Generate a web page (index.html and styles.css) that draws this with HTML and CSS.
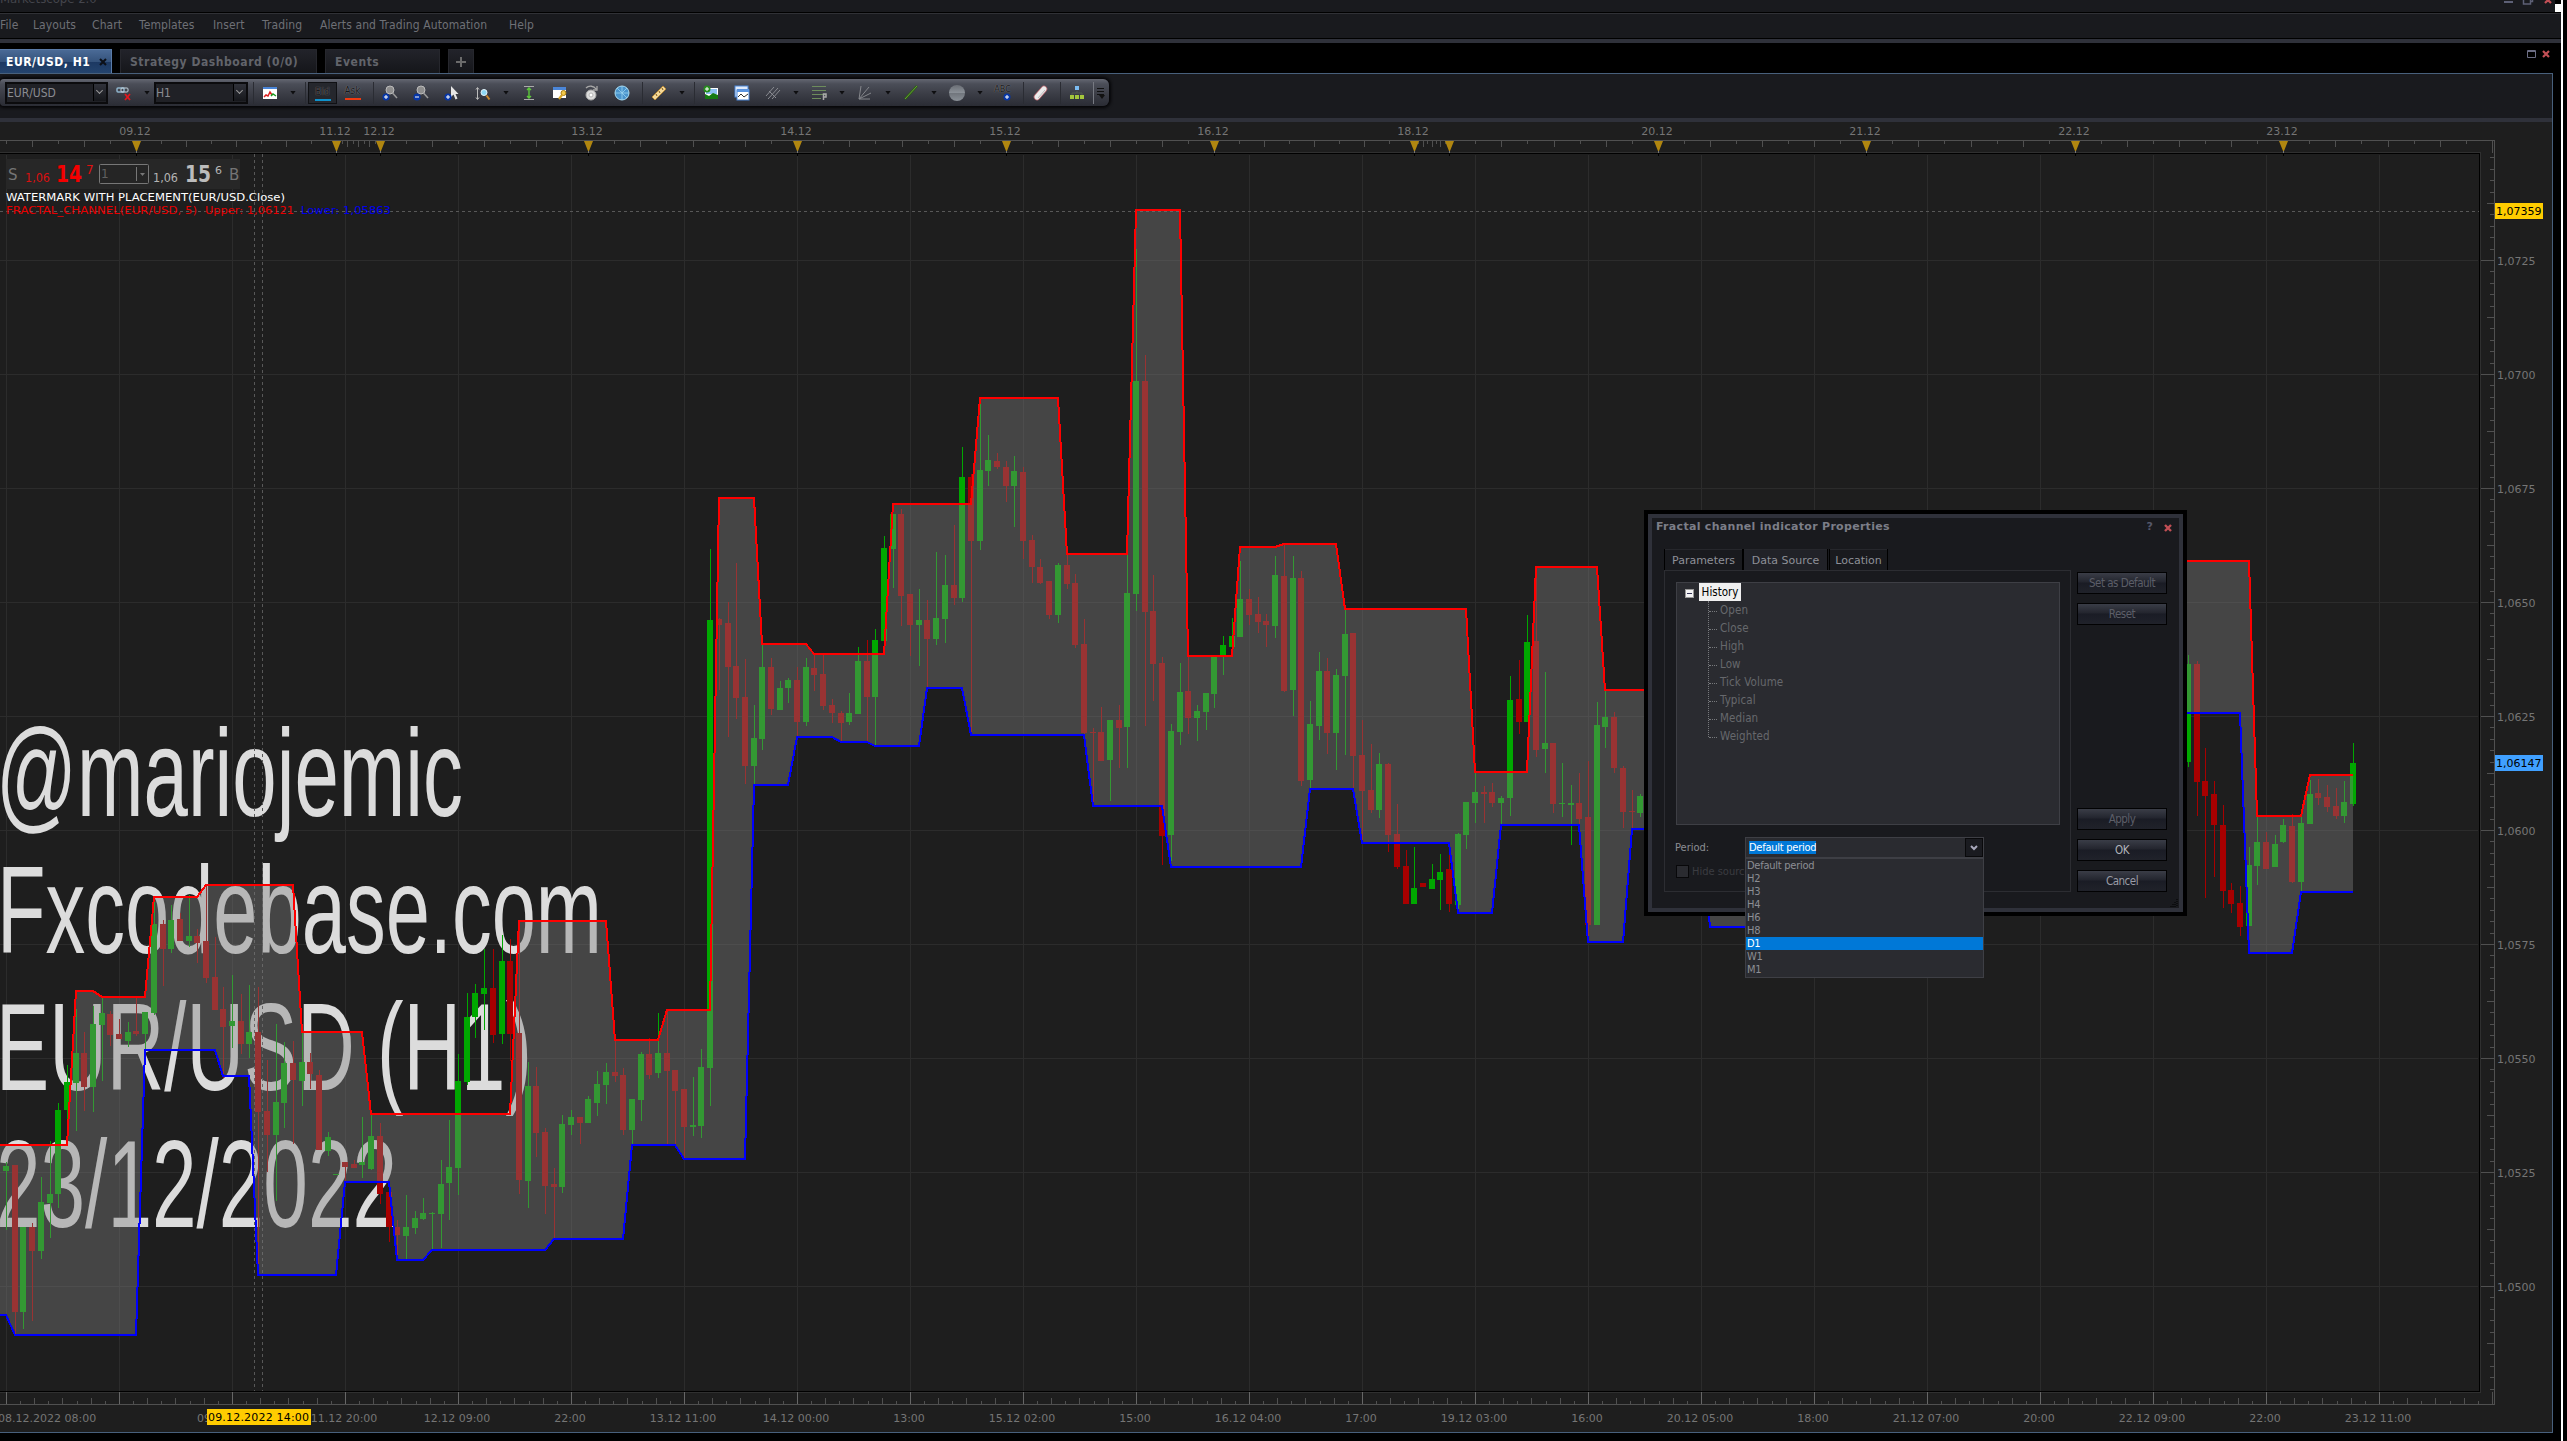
FILE: index.html
```html
<!DOCTYPE html>
<html lang="en">
<head>
  <meta charset="UTF-8" />
  <title>Marketscope 2.0</title>
  <link rel="stylesheet" href="styles.css">
</head>
<body>
  <div class="window">
    <header class="titlebar">
      <span class="app-name">Marketscope 2.0</span>
      <svg class="window-buttons" width="50" height="8" viewBox="0 0 50 8">
        <path d="M1 2h9" stroke="#5d6076" stroke-width="2" />
        <path d="M20.500 -3v7h7v-7M27 1.500h2.500v-4" fill="none" stroke="#5d6076" stroke-width="1.500" />
        <path d="M42 3l6-6M42 -3l6 6" stroke="#c24f55" stroke-width="2.200" />
      </svg>
    </header>

    <nav class="menu">
      <span class="m-file">File</span>
      <span class="m-layouts">Layouts</span>
      <span class="m-chart">Chart</span>
      <span class="m-templates">Templates</span>
      <span class="m-insert">Insert</span>
      <span class="m-trading">Trading</span>
      <span class="m-alerts">Alerts and Trading Automation</span>
      <span>Help</span>
    </nav>

    <div class="tabs">
      <div class="tab tab-active">EUR/USD, H1
        <svg width="8" height="8" viewBox="0 0 8 8"><path d="M1 1l6 6M7 1l-6 6" stroke="#0c1018" stroke-width="2" /></svg>
      </div>
      <div class="tab tab-dashboard">Strategy Dashboard (0/0)</div>
      <div class="tab tab-events">Events</div>
      <div class="tab tab-add">
        <svg width="10" height="10" viewBox="0 0 10 10"><path d="M5 0v10M0 5h10" stroke="#6b6b6b" stroke-width="2" /></svg>
      </div>
      <svg class="tab-buttons" width="24" height="9" viewBox="0 0 24 9">
        <path d="M.500 .500h8v7h-8zM0 1.500h9" fill="none" stroke="#6b6d84" />
        <path d="M16 1l6 6M22 1l-6 6" stroke="#c24f55" stroke-width="2.200" />
      </svg>
    </div>

    <main class="workspace">
      <div class="toolbar-row">
        <div class="toolbar">
          <div class="combo combo-symbol"><span>EUR/USD</span><i class="combo-arrow"></i></div>
          <span class="tool">
            <svg width="16" height="16" viewBox="0 0 16 16"><rect x="1" y="3" width="7" height="4" rx="1" fill="none" stroke="#8fb4cc" stroke-width="1.500" /><rect x="5" y="3" width="7" height="4" rx="1" fill="none" stroke="#c4d4de" /><path d="M9 9l5 6M14 9l-5 6" stroke="#e0181e" stroke-width="1.800" /></svg>
          </span>
          <i class="caret"></i>
          <div class="combo combo-period"><span>H1</span><i class="combo-arrow"></i></div>
          <i class="sep"></i>
          <span class="tool">
            <svg width="16" height="16" viewBox="0 0 16 16"><rect x="1" y="2" width="14" height="12" fill="#fff" /><rect x="1" y="2" width="14" height="2" fill="#4b86d8" /><path d="M2 12l2-2 2 1 2-4 2 3" fill="none" stroke="#d22" stroke-width="1.500" /><path d="M9 11l2-2 3 2" fill="none" stroke="#1a9a20" stroke-width="1.500" /></svg>
          </span>
          <i class="caret"></i>
          <i class="sep"></i>
          <span class="quote quote-bid">Bid</span>
          <span class="quote quote-ask">Ask</span>
          <i class="sep"></i>
          <span class="tool">
            <svg width="16" height="16" viewBox="0 0 16 16"><circle cx="8" cy="5" r="4" fill="#8e8e8e" stroke="#bbb" /><path d="M10.500 8l4.500 5" stroke="#9a9a9a" stroke-width="1.500" /><circle cx="4" cy="12" r="3.500" fill="#0636a8" /><path d="M4 10v4M2 12h4" stroke="#fff" /></svg>
          </span>
          <span class="tool">
            <svg width="16" height="16" viewBox="0 0 16 16"><circle cx="8" cy="5" r="4" fill="#8e8e8e" stroke="#bbb" /><path d="M10.500 8l4.500 5" stroke="#9a9a9a" stroke-width="1.500" /><circle cx="4" cy="12" r="3.500" fill="#0636a8" /><path d="M2 12h4" stroke="#fff" /></svg>
          </span>
          <span class="tool">
            <svg width="16" height="16" viewBox="0 0 16 16"><path d="M7 1v11l2.500-2.500 2 5 2-1-2-4.500h3z" fill="#e6e6e6" /><circle cx="4" cy="12" r="3.500" fill="#0636a8" /><path d="M4 10v4M2 12h4" stroke="#fff" /></svg>
          </span>
          <span class="tool">
            <svg width="16" height="16" viewBox="0 0 16 16"><path d="M2.500 3v11M1 4.500L2.500 2.500 4 4.500M1 12.500l1.500 2 1.500-2" fill="none" stroke="#bbb" /><circle cx="9" cy="7.500" r="3" fill="#8fd8f4" stroke="#e6f6fc" /><path d="M11.500 10.500l3 4" stroke="#c8862a" stroke-width="2" /></svg>
          </span>
          <i class="caret"></i>
          <span class="tool">
            <svg width="16" height="16" viewBox="0 0 16 16"><path d="M3 1.500h10M3 14.500h10" stroke="#aaa" /><path d="M8 3v10M6 5l2-2 2 2M6 11l2 2 2-2" fill="none" stroke="#5cc83a" stroke-width="1.400" /></svg>
          </span>
          <span class="tool">
            <svg width="16" height="16" viewBox="0 0 16 16"><rect x="1" y="2" width="13" height="11" fill="#fff" /><rect x="1" y="2" width="13" height="3" fill="#4b86d8" /><circle cx="11.500" cy="8" r="2.500" fill="#f2c84a" stroke="#a87d14" /><path d="M10 10l-3 4" stroke="#d9a526" stroke-width="2.200" /></svg>
          </span>
          <span class="tool">
            <svg width="16" height="16" viewBox="0 0 16 16"><circle cx="8" cy="10" r="5" fill="#ddd" stroke="#aaa" /><circle cx="8" cy="10" r="2" fill="#fff" stroke="#b5b5b5" /><path d="M3 3c3-3 8-2 10 1M14 1v4h-4" fill="none" stroke="#a8a8a8" stroke-width="1.300" /></svg>
          </span>
          <span class="tool">
            <svg width="16" height="16" viewBox="0 0 16 16"><circle cx="8" cy="8" r="7" fill="#4a94cc" stroke="#a8dcf2" /><path d="M8 1v14M1 8h14M3 3l5 5 5-5M8 8l5 5" stroke="#9ad4f0" stroke-width=".8" fill="none" /></svg>
          </span>
          <i class="sep"></i>
          <span class="tool">
            <svg width="16" height="16" viewBox="0 0 16 16"><path d="M1 12L12 1l3 3L4 15z" fill="#f4d898" stroke="#b88a38" /><path d="M5 9l1 2M8 6l1 2M11 3l1 2" stroke="#7a5418" /></svg>
          </span>
          <i class="caret"></i>
          <i class="sep"></i>
          <span class="tool">
            <svg width="16" height="16" viewBox="0 0 16 16"><rect x="2" y="3" width="13" height="11" fill="#fff" /><rect x="3" y="4" width="11" height="5" fill="#8cc0f0" /><path d="M2 14V9l4 2 4-3 5 2v4z" fill="#157a10" /><circle cx="4" cy="4" r="3.500" fill="#258c1c" /><path d="M4 2v4M2 4h4" stroke="#fff" /></svg>
          </span>
          <span class="tool">
            <svg width="16" height="16" viewBox="0 0 16 16"><rect x="1" y="1" width="13" height="11" fill="#dfeafa" stroke="#4b86d8" /><rect x="3" y="5" width="12" height="10" fill="#fff" stroke="#4b86d8" /><rect x="3" y="4" width="12" height="3" fill="#5a94e0" /><path d="M4 12l3-3 3 3 4-3" fill="none" stroke="#333" /></svg>
          </span>
          <span class="tool">
            <svg width="16" height="16" viewBox="0 0 16 16"><path d="M1 11L9 2M3 14L13 3M7 14l8-9M4 6l7 7" stroke="#8a8c92" /></svg>
          </span>
          <i class="caret"></i>
          <span class="tool">
            <svg width="16" height="16" viewBox="0 0 16 16"><path d="M1 1.500h14M1 5.500h14M1 9.500h14M1 13.500h9" stroke="#6d8c5c" stroke-width="1.200" /><path d="M12.500 15V9h2.500v3h-2" fill="none" stroke="#aaa" stroke-width="1.500" /></svg>
          </span>
          <i class="caret"></i>
          <span class="tool">
            <svg width="16" height="16" viewBox="0 0 16 16"><path d="M2 14L4 1M2 14L12 2M2 14l12-6M2 14h11" stroke="#85878c" /></svg>
          </span>
          <i class="caret"></i>
          <span class="tool">
            <svg width="16" height="16" viewBox="0 0 16 16"><path d="M2 14L14 1" stroke="#2e5c16" stroke-width="2.500" /><path d="M2 14L14 1" stroke="#62a034" /></svg>
          </span>
          <i class="caret"></i>
          <span class="tool"><i class="ball"></i></span>
          <i class="caret"></i>
          <span class="tool tool-text">ABC
            <svg width="8" height="8" viewBox="0 0 8 8"><circle cx="4" cy="4" r="3.500" fill="#0636a8" /><path d="M4 2v4M2 4h4" stroke="#fff" /></svg>
          </span>
          <i class="sep"></i>
          <span class="tool">
            <svg width="16" height="16" viewBox="0 0 16 16"><path d="M5 12L12 4" stroke="#b86a72" stroke-width="6.500" stroke-linecap="round" /><path d="M5 12L12 4" stroke="#ececec" stroke-width="5" stroke-linecap="round" /><path d="M6 13l7-8" stroke="#bbb" /></svg>
          </span>
          <i class="sep"></i>
          <span class="tool">
            <svg width="16" height="16" viewBox="0 0 16 16"><rect x="6" y="1" width="4" height="4" fill="#7cbcf2" /><path d="M8 6v2M3 10V8h10v2" stroke="#555a52" fill="none" /><path d="M1 10h4v4H1zM6 10h4v4H6zM11 10h4v4h-4z" fill="#a4c63c" /></svg>
          </span>
          <i class="sep sep-last"></i>
          <svg class="grip" width="10" height="12" viewBox="0 0 10 12"><path d="M1 1.500h7M1 4.500h7M1 7.500h7" stroke="#111" /><path d="M3 8h6l-3 4z" fill="#111" /></svg>
        </div>
      </div>
      <svg id="chart" width="2552" height="1310" viewBox="0 122 2552 1310"></svg>
    </main>
  </div>

  <div class="dialog">
    <div class="dialog-title">
      <span>Fractal channel indicator Properties</span>
      <b>?</b>
      <svg width="8" height="8" viewBox="0 0 8 8"><path d="M1 1l6 6M7 1l-6 6" stroke="#c24f55" stroke-width="2.400" /></svg>
    </div>
    <div class="dialog-body">
      <div class="dialog-main">
        <div class="dialog-tabs">
          <span class="d-params">Parameters</span>
          <span class="d-source">Data Source</span>
          <span class="d-location">Location</span>
        </div>
        <div class="panel">
          <div class="tree">
            <div class="tree-root"><i class="toggle"></i><span>History</span></div>
            <ul>
              <li>Open</li>
              <li>Close</li>
              <li>High</li>
              <li>Low</li>
              <li>Tick Volume</li>
              <li>Typical</li>
              <li>Median</li>
              <li>Weighted</li>
            </ul>
          </div>
          <div class="period-row">
            <label>Period:</label>
            <div class="select">
              <span>Default period</span>
              <i class="select-arrow"><svg width="8" height="6" viewBox="0 0 8 6"><path d="M1 1l3 3 3-3" fill="none" stroke="#a8a8bc" stroke-width="2" /></svg></i>
              <div class="options">
                <div>Default period</div>
                <div>H2</div>
                <div>H3</div>
                <div>H4</div>
                <div>H6</div>
                <div>H8</div>
                <div class="selected">D1</div>
                <div>W1</div>
                <div>M1</div>
              </div>
            </div>
          </div>
          <div class="hide-row"><i></i>Hide source</div>
        </div>
      </div>
      <div class="dialog-buttons">
        <button class="off">Set as Default</button>
        <button class="off">Reset</button>
        <button class="off apply">Apply</button>
        <button class="ok">OK</button>
        <button>Cancel</button>
      </div>
    </div>
    <svg class="resize" width="8" height="8" viewBox="0 0 8 8"><path d="M7 0v8M5 3v5M3 5v3M1 7v1" stroke="#000" stroke-dasharray="1 1" /></svg>
  </div>

  <script src="chart.js"></script>
</body>
</html>
```
FILE: styles.css
```css
body {
  margin: 0;
  width: 2567px;
  height: 1441px;
  overflow: hidden;
  background: #000;
  font-family: "DejaVu Sans Condensed", "DejaVu Sans", sans-serif;
  font-size: 12px;
  color: #6e7076;
}
.window {
  width: 2561px;
  height: 1441px;
  border-right: 2px solid #fff;
}
.titlebar {
  display: flex;
  justify-content: space-between;
  width: 2555px;
  height: 12px;
  background: #191a1e;
  box-shadow: 8px 4px 0 #fff;
  overflow: hidden;
}
.app-name {
  line-height: 14px;
  margin-top: -8px;
  font-size: 13px;
  color: #44454c;
}
.window-buttons {
  margin-right: 2px;
}
.menu {
  display: flex;
  box-sizing: border-box;
  height: 31px;
  border-top: 1px solid #000;
  border-bottom: 4px solid #2f313a;
  box-shadow: inset 0 1px 0 #303136, inset 0 -1px 0 #000;
  background: #191a1e;
  line-height: 25px;
  white-space: nowrap;
}
.menu span {
  letter-spacing: 0.1px;
}
.m-file { width: 33px; }
.m-layouts { width: 59px; }
.m-chart { width: 47px; }
.m-templates { width: 74px; }
.m-insert { width: 49px; }
.m-trading { width: 58px; }
.m-alerts { width: 189px; }

.tabs {
  display: flex;
  align-items: flex-end;
  gap: 8px;
  height: 30px;
  background: #000;
}
.tab {
  display: flex;
  align-items: center;
  box-sizing: border-box;
  height: 24px;
  padding-left: 9px;
  border: 1px solid #26272d;
  border-bottom: none;
  background: linear-gradient(#22232a, #15161a);
  color: #62646b;
  font-weight: bold;
  letter-spacing: 0.55px;
}
.tab-active {
  justify-content: space-between;
  width: 112px;
  padding: 0 4px 0 6px;
  border-color: #5a7ba8;
  border-left: none;
  background: linear-gradient(#4a6a96 0, #35537c 50%, #1c3862 51%, #24446e);
  color: #fff;
  white-space: nowrap;
}
.tab-dashboard { width: 197px; }
.tab-events { width: 115px; }
.tab-add {
  width: 26px;
  padding-left: 7px;
}
.tab-buttons {
  margin: 0 10px 14px auto;
}
.workspace {
  width: 2552px;
  height: 1358px;
  border: 1px solid #48607c;
  border-left: none;
}
.toolbar-row {
  box-sizing: border-box;
  height: 48px;
  padding-top: 5px;
  background: #191a1e;
  border-bottom: 4px solid #2f313a;
}
.toolbar {
  display: flex;
  align-items: center;
  box-sizing: border-box;
  width: 1109px;
  height: 27px;
  padding-left: 5px;
  border-radius: 4px 6px 6px 4px;
  background: linear-gradient(#646772 0, #4b4e58 18%, #3b3d46 55%, #2a2c34 100%);
  box-shadow: 0 0 3px 2px #060608;
}
.combo {
  display: flex;
  justify-content: space-between;
  align-items: center;
  box-sizing: border-box;
  height: 22px;
  border: 2px solid #0b0b0d;
  background: #202126;
  color: #8a8c92;
}
.combo-symbol { width: 103px; }
.combo-period { width: 94px; }
.combo-arrow {
  box-sizing: border-box;
  width: 13px;
  height: 17px;
  border-left: 1px solid #000;
  background: linear-gradient(#30323a, #16171b);
  position: relative;
}
.combo-arrow::after {
  content: "";
  position: absolute;
  left: 3px;
  top: 4px;
  width: 4px;
  height: 4px;
  border: solid #999;
  border-width: 0 1px 1px 0;
  transform: rotate(45deg);
}
.tool {
  display: flex;
  justify-content: center;
  flex: none;
  width: 31px;
}
.caret {
  flex: none;
  box-sizing: border-box;
  width: 15px;
  height: 4px;
  background: #0e0e10;
  clip-path: polygon(5px 0, 11px 0, 8px 4px);
}
.sep {
  flex: none;
  width: 1px;
  height: 22px;
  margin-left: 5px;
  background: #2a2c33;
}
.sep-last {
  margin-left: 1px;
  background: #777a82;
}
.grip {
  margin-left: 2px;
}
.quote {
  box-sizing: border-box;
  height: 22px;
  text-align: center;
  font-size: 10px;
  line-height: 17px;
  color: #17181b;
  text-shadow: 0 0 1px #9a9a9a;
}
.quote::after {
  content: "";
  display: block;
  width: 16px;
  height: 2px;
  margin: -1px auto 0;
  background: #0f92cc;
}
.quote-bid {
  width: 29px;
  margin-left: 2px;
  background: #25272d;
  border: 1px solid #101114;
}
.quote-ask { width: 31px; }
.quote-ask::after { background: #f03a10; }
.ball {
  width: 16px;
  height: 16px;
  border-radius: 50%;
  background: linear-gradient(#6a6e75, #8c9299 50%, #70757c 51%, #8a9097);
}
.tool-text {
  position: relative;
  font-size: 9px;
  color: #17181b;
  text-shadow: 0 0 1px #999;
  line-height: 20px;
  height: 27px;
}
.tool-text svg {
  position: absolute;
  left: 16px;
  top: 14px;
}
#chart {
  display: block;
  background: #1e1e1e;
  font-family: "DejaVu Sans", sans-serif;
  font-size: 11px;
}

.dialog {
  position: absolute;
  left: 1644px;
  top: 510px;
  box-sizing: border-box;
  width: 543px;
  height: 406px;
  border: 4px solid #000;
  box-shadow: inset 0 0 0 4px #2f313a;
  padding: 4px;
  background: #191a1e;
  font-size: 11px;
}
.dialog-title {
  display: flex;
  align-items: center;
  height: 16px;
  padding: 0 7px 1px 4px;
  font: bold 11px "DejaVu Sans", sans-serif;
  color: #7c7e88;
}
.dialog-title span {
  flex: 1;
  letter-spacing: 0.3px;
}
.dialog-title b {
  margin-right: 11px;
  color: #55576a;
}
.dialog-title svg { margin-top: 3px; }
.dialog-body {
  display: flex;
  justify-content: space-between;
  padding: 14px 12px 0 12px;
}
.dialog-main { width: 407px; }
.dialog-tabs {
  display: flex;
  height: 21px;
  line-height: 23px;
  font-family: "DejaVu Sans", sans-serif;
  color: #8e9098;
  text-align: center;
}
.dialog-tabs span {
  box-sizing: border-box;
  border: solid #000;
  border-width: 0 1px;
  box-shadow: inset 0 1px 0 #26272c;
}
.d-params { width: 79px; }
.d-source { width: 85px; background: #212228; }
.d-location { width: 59px; margin-left: 1px; }
.panel {
  box-sizing: border-box;
  height: 322px;
  padding: 11px 10px 11px 11px;
  border: 1px solid #2c2d32;
}
.tree {
  box-sizing: border-box;
  height: 243px;
  border: 1px solid #3e3f45;
  background: #2a2b30;
  font-size: 11.5px;
  color: #66686c;
}
.tree-root {
  display: flex;
  align-items: center;
  height: 18px;
  padding-left: 8px;
}
.tree-root span {
  width: 42px;
  margin-left: 5px;
  line-height: 18px;
  text-align: center;
  background: #f0f0f0;
  color: #000;
}
.toggle {
  box-sizing: border-box;
  width: 9px;
  height: 9px;
  margin-top: 2px;
  border: 1px solid #999;
  background: linear-gradient(#335 0 0) center / 5px 1px no-repeat #f4f4f4;
}
.tree ul {
  list-style: none;
  margin: 0 0 0 31px;
  padding: 0;
  height: 136px;
  border-left: 1px dotted #77797c;
}
.tree li {
  display: flex;
  align-items: center;
  height: 18px;
  letter-spacing: 0.1px;
}
.tree li::before {
  content: "";
  width: 8px;
  margin: 2px 3px 0 0;
  border-top: 1px dotted #77797c;
}
.period-row {
  display: flex;
  align-items: center;
  height: 21px;
  margin-top: 12px;
  color: #8c8e94;
}
.period-row label {
  width: 70px;
  margin-left: -1px;
}
.select {
  position: relative;
  display: flex;
  align-items: center;
  justify-content: space-between;
  box-sizing: border-box;
  width: 239px;
  height: 21px;
  padding-left: 3px;
  border: 1px solid #3e3f45;
  background: #2a2b30;
  letter-spacing: -0.25px;
}
.select > span {
  line-height: 13px;
  background: #0078d7;
  color: #fff;
}
.select-arrow {
  display: flex;
  align-items: center;
  justify-content: center;
  width: 16px;
  height: 17px;
  border: 1px solid #09090b;
  background: #1a1b20;
}
.options {
  position: absolute;
  left: -1px;
  top: 20px;
  width: 237px;
  height: 118px;
  border: 1px solid #3e3f45;
  background: #2a2b30;
  line-height: 14px;
  color: #8c8e94;
}
.options div {
  height: 13px;
  padding-left: 1px;
}
.options .selected {
  background: #0078d7;
  color: #fff;
}
.hide-row {
  display: flex;
  align-items: center;
  margin-top: 7px;
  color: #3b3c41;
}
.hide-row i {
  width: 11px;
  height: 11px;
  margin-right: 3px;
  border: 1px solid #08080a;
  background: #2a2b30;
}
.dialog-buttons {
  display: flex;
  flex-direction: column;
  gap: 9px;
  padding-top: 23px;
  height: 320px;
}
.dialog-buttons button {
  box-sizing: border-box;
  width: 90px;
  height: 22px;
  padding: 0;
  border: 1px solid #020203;
  background: linear-gradient(#3a3d47 0, #23252e 45%, #1a1c25 50%, #20222a);
  font: 11.500px "DejaVu Sans Condensed", sans-serif;
  letter-spacing: -0.5px;
  color: #9a9ca6;
}
.dialog-buttons .off { color: #5c5e68; }
.dialog-buttons .apply { margin-top: auto; }
.dialog-buttons .ok { color: #b0b2ba; }
.resize {
  position: absolute;
  right: 5px;
  bottom: 5px;
}
```
FILE: chart.js
```js
const svg = document.getElementById('chart');
const NS = 'http://www.w3.org/2000/svg';

const UP = '#00a800';
const DOWN = '#a80000';
const GRID = '#2c2c2c';
const AXIS = '#505050';
const LABEL = '#757575';

const barX = i => Math.round(6.1 + i * 113 / 13);

function add(tag, attrs, text) {
  const el = document.createElementNS(NS, tag);
  for (const key in attrs) el.setAttribute(key, attrs[key]);
  if (text !== undefined) el.textContent = text;
  svg.appendChild(el);
  return el;
}
function rect(x, y, width, height, fill) {
  add('rect', { x, y, width, height, fill });
}
function label(x, y, text, fill, extra) {
  add('text', Object.assign({ x, y, fill }, extra), text);
}

// bars: direction, high, body top, body bottom, low (y = base + value / step)
const series = [
  { first: -1, base: 640, step: 2.24, bars: `
    G 1187 1187 1320 1320|G 1170 1178 1189 1322|R 1176 1176 1505 1556|G 1315 1315 1505 1543
    R 1306 1315 1369 1525|G 1203 1259 1369 1386|G 1122 1241 1261 1340|G 1038 1053 1241 1272
    G 952 990 1053 1090|G 826 925 992 1100|R 878 925 1001 1056|G 820 860 1001 1057
    G 800 836 862 987|R 830 838 885 910|R 849 883 894 894|G 856 878 898 912
    R 800 876 883 888|G 834 834 883 917|G 577 636 836 840|R 627 636 692 775
    G 594 627 692 700|R 612 625 674 674|G 571 663 674 688|R 647 663 679 724
    R 550 674 757 768|R 665 755 829 829|R 777 827 867 980|G 750 853 865 914
    R 793 853 905 928|G 773 878 905 936|R 778 878 1057 1420|R 940 1055 1109 1192
    G 860 1035 1109 1257|G 900 948 1037 1094|R 898 948 986 1130|G 880 945 988 1044
    R 925 945 972 1006|R 963 974 1142 1142|G 1102 1113 1145 1156|G 1196 1196 1198 1198
    R 1170 1170 1180 1211|R 1165 1174 1183 1183|G 1068 1169 1176 1205|G 1062 1111 1185 1187
    R 1082 1111 1240 1263|R 1236 1236 1315 1348|R 1300 1314 1333 1388|G 1243 1315 1335 1386
    G 1279 1295 1317 1331|G 1250 1284 1297 1299|G 1281 1284 1286 1366|G 1165 1219 1286 1362
    G 1075 1180 1216 1299|G 927 988 1183 1244|G 791 844 990 997|G 771 791 844 892
    G 693 780 793 874|R 692 780 885 902|G 661 719 883 905|R 670 719 883 942
    R 630 880 1210 1241|G 945 999 1212 1272|R 956 999 1104 1157|R 1092 1102 1223 1286
    R 1183 1219 1225 1341|G 1064 1084 1225 1239|G 1053 1068 1086 1108|R 1068 1068 1082 1130
    G 1022 1028 1082 1082|G 965 995 1038 1067` },
  { first: 69, base: 850, step: 3, bars: `
    G 639 666 705 762|R 572 666 678 696|R 654 675 840 855|G 747 747 840 884
    G 606 612 750 813|R 564 612 675 687|G 489 609 669 684|R 482 609 663 882
    R 660 660 723 882|R 717 717 831 924|G 681 825 831 858|G 597 651 828 864
    G -903 -690 654 768` },
  { first: 82, base: 180, step: 2.24, bars: `
    R 980 983 997 1143|R 946 992 1091 1248|R 859 1089 1160 1207|R 1073 1158 1313 1352
    G 1176 1250 1313 1355|G 1040 1091 1252 1277|R 1071 1091 1185 1198|G 1122 1138 1187 1187
    G 1116 1120 1138 1172|R 1091 1120 1214 1246|G 1071 1091 1214 1223|R 1062 1093 1109 1145
    R 1065 1107 1178 1187|R 1163 1176 1194 1216|R 1189 1194 1216 1257|G 1149 1194 1214 1221
    G 1047 1077 1196 1196|R 1030 1077 1158 1259|G 1006 1030 1158 1266|G 797 824 1033 1033
    G 748 748 827 914|R 737 748 932 999|R 927 927 997 1066|G 916 986 997 1089
    R 941 986 1028 1138|G 833 981 1028 1042|G 840 907 983 1037|R 773 907 936 953
    G 598 665 936 945|R 658 665 809 1244|G 490 650 809 829|G 571 627 652 685
    R 611 629 643 647|R 629 643 685 721|G 618 652 685 777|R 643 654 809 849
    R 795 806 867 903|R 849 867 903 905|R 898 898 974 983|G 858 862 974 992
    R 840 862 905 916|R 883 903 1042 1048|R 983 1039 1239 1244|R 1228 1236 1239 1400
    R 1180 1236 1301 1301|G 1210 1210 1299 1391|R 1176 1210 1228 1317|G 840 925 1225 1317
    G 155 450 927 965|R 392 450 968 1223|R 885 965 1084 1168|R 1068 1082 1469 1534
    G 1219 1234 1467 1525|G 1082 1147 1236 1266|R 1066 1145 1205 1241|G 1176 1189 1205 1257
    G 1149 1149 1192 1232|G 1066 1068 1151 1183|G 1021 1042 1064 1109|G 981 1021 1046 1046
    G 853 939 1024 1024|R 916 939 974 997|R 934 972 990 1015` },
  { first: 145, base: 500, step: 3, bars: `
    R 342 363 375 441|G 168 225 378 414|R 135 228 573 576|G 168 234 570 648
    R 213 234 843 858|G 603 672 840 866|G 456 513 678 720|R 474 513 699 762
    G 507 525 699 810|G 327 402 528 765|R 399 399 768 866|R 660 765 873 1027
    R 732 870 930 939|G 759 792 930 954|R 789 792 1005 1056|R 912 1002 1101 1107
    R 1050 1098 1212 1212|G 1041 1164 1212 1212|R 1149 1149 1161 1161|G 1092 1137 1167 1167
    G 1062 1116 1140 1230|R 1065 1107 1212 1236|G 999 1002 1215 1238|G 906 906 1005 1047
    G 817 876 909 969|R 858 876 882 969|R 849 876 909 921|G 888 894 909 974
    G 528 600 894 948|R 480 597 666 702|G 345 426 666 666|R 202 423 750 771
    G 516 729 747 819|R 729 729 912 939|G 789 909 912 951|G 855 909 915 1035
    R 819 909 957 972|R 783 951 1275 1325|G 606 675 1275 1275|G 572 651 681 744
    R 636 651 804 819|R 798 804 936 984|R 870 933 936 984|G 882 888 939 951` },
  { first: 251, base: 520, step: 3, bars: `
    G 405 432 726 741|R 423 432 786 888|R 684 783 828 1134|R 783 822 915 1071
    R 855 915 1113 1164|R 1089 1110 1152 1179|R 1098 1149 1221 1248|G 981 1035 1218 1218
    G 889 966 1038 1095|R 935 966 1047 1047|G 945 972 1041 1041|G 897 915 966 969
    R 882 918 1086 1089|G 889 909 1086 1115|G 780 822 912 912|R 777 819 834 855
    R 795 831 861 876|R 804 858 888 897|G 783 846 888 909|G 669 729 852 858` }
];

// fractal channel, [bar, y]
const upper = [[-1, 1145], [7, 1145], [8, 991], [10, 991], [11, 997], [16, 997], [17, 897], [22, 897],
  [23, 885], [33, 885], [34, 1032], [41, 1032], [42, 1114], [58, 1114], [59, 921], [69, 921],
  [70, 1040], [75, 1040], [76, 1010], [81, 1010], [82, 498], [86, 498], [87, 644], [92, 644],
  [93, 654], [101, 654], [102, 504], [111, 504], [112, 398], [121, 398], [122, 554], [129, 554],
  [130, 210], [135, 210], [136, 656], [141, 656], [142, 547], [146, 547], [147, 544], [153, 544],
  [154, 609], [168, 609], [169, 772], [175, 772], [176, 567], [183, 567], [184, 690], [248, 690],
  [249, 561], [258, 561], [259, 816], [264, 816], [265, 775], [270, 775]];
const lower = [[-1, 1315], [0, 1315], [1, 1335], [15, 1335], [16, 1050], [24, 1050], [25, 1076], [28, 1076],
  [29, 1275], [38, 1275], [39, 1182], [44, 1182], [45, 1260], [48, 1260], [49, 1250], [62, 1250],
  [63, 1239], [71, 1239], [72, 1145], [77, 1145], [78, 1159], [85, 1159], [86, 785], [90, 785],
  [91, 737], [95, 737], [96, 742], [99, 742], [100, 746], [105, 746], [106, 688], [110, 688],
  [111, 735], [124, 735], [125, 806], [133, 806], [134, 867], [149, 867], [150, 789], [155, 789],
  [156, 843], [166, 843], [167, 913], [171, 913], [172, 825], [181, 825], [182, 942], [186, 942],
  [187, 829], [195, 829], [196, 927], [203, 927], [204, 850], [248, 850], [249, 713], [257, 713],
  [258, 953], [263, 953], [264, 892], [270, 892]];

// grid
for (let k = 0; k < 22; k++) rect(6 + k * 113, 155, 1, 1236, GRID);
for (let k = 0; k < 10; k++) rect(0, 260 + k * 114, 2478, 1, GRID);

// watermark
const watermark = [['@mariojemic', -4, 467], ['Fxcodebase.com', -3, 605], ['EUR/USD (H1)', -4, 536], ['23/12/2022', -4, 401]];
watermark.forEach((line, n) => label(line[1], 816 + n * 137, line[0], '#dcdcdc', {
  'font-family': 'Liberation Sans', 'font-size': 124, textLength: line[2], lengthAdjust: 'spacingAndGlyphs'
}));

// candles
series.forEach(part => {
  part.bars.trim().split(/[|\n]/).forEach((bar, n) => {
    const v = bar.trim().split(' ');
    const y = v.slice(1).map(p => Math.round(part.base + p / part.step));
    const x = barX(part.first + n);
    const color = v[0] === 'G' ? UP : DOWN;
    rect(x, y[0], 1, y[3] - y[0], color);
    rect(x - 3, y[1], 6, Math.max(1, y[2] - y[1]), color);
  });
});

// crosshair
const dash = { stroke: '#585858', 'stroke-dasharray': '3 3', fill: 'none' };
add('path', Object.assign({ d: 'M0 211.5H2479' }, dash));
add('path', Object.assign({ d: 'M254.5 154V1391M262.5 154V1391' }, dash));

// channel
const toPoints = line => line.map(p => barX(p[0]) + ',' + p[1]).join(' ');
add('polygon', { points: toPoints(upper) + ' ' + toPoints(lower.slice().reverse()), fill: '#808080', 'fill-opacity': 0.4 });
add('polyline', { points: toPoints(upper), fill: 'none', stroke: '#f00', 'stroke-width': 2, 'shape-rendering': 'crispEdges' });
add('polyline', { points: toPoints(lower), fill: 'none', stroke: '#00f', 'stroke-width': 2, 'shape-rendering': 'crispEdges' });

// frame
rect(0, 152, 2481, 1, '#303030');
rect(0, 153, 2480, 1, '#000');
rect(2479, 153, 1, 1239, '#000');
rect(2480, 152, 1, 1241, '#303030');
rect(0, 1391, 2480, 1, '#000');
rect(0, 1392, 2481, 1, '#303030');

// day axis
rect(0, 140, 2495, 1, AXIS);
const days = [[-9], [15, '09.12'], [38, '11.12'], [43, '12.12'], [67, '13.12'], [91, '14.12'], [115, '15.12'],
  [139, '16.12'], [162, '18.12'], [166], [190, '20.12'], [214, '21.12'], [238, '22.12'], [262, '23.12'], [286]];
days.forEach((day, n) => {
  const x = barX(day[0]);
  if (n < days.length - 1) {
    const span = barX(days[n + 1][0]) - x;
    for (let k = 1; k < 8; k++) rect(Math.round(x + span * k / 8), 141, 1, k % 2 ? 3 : 6, AXIS);
  }
  if (x > 0 && x < 2480) {
    add('path', { d: `M${x - 4} 141h9l-4 10h-1z`, fill: '#b08610' });
    rect(x, 151, 1, 2, '#777');
    rect(x, 153, 1, 3, '#000');
  }
  if (day[1]) label(x - 1, 135, day[1], LABEL, { 'text-anchor': 'middle' });
});
rect(2492, 141, 1, 12, AXIS);

// time axis
rect(0, 1404, 2495, 1, AXIS);
const times = ['', '', '', '11.12 20:00', '12.12 09:00', '22:00', '13.12 11:00', '14.12 00:00', '13:00',
  '15.12 02:00', '15:00', '16.12 04:00', '17:00', '19.12 03:00', '16:00', '20.12 05:00', '18:00', '21.12 07:00',
  '20:00', '22.12 09:00', '22:00', '23.12 11:00'];
times.forEach((time, n) => {
  const x = 6 + n * 113;
  rect(x, 1392, 1, 12, '#666');
  for (let k = 1; k < 8; k++) rect(Math.round(x + k * 14.1), k % 2 ? 1401 : 1398, 1, k % 2 ? 3 : 6, AXIS);
  if (time) label(x - 1, 1422, time, LABEL, { 'text-anchor': 'middle' });
});
label(-2, 1422, '08.12.2022 08:00', LABEL);
label(197, 1422, '09', LABEL);
rect(2492, 1392, 1, 12, AXIS);
rect(207, 1409, 104, 16, '#fc0');
label(208, 1421, '09.12.2022 14:00', '#000', { textLength: 101 });

// price axis
rect(2494, 140, 1, 1265, AXIS);
for (let k = -9; k < 100; k++) {
  const y = Math.round(260 + k * 11.4);
  const w = k % 10 === 0 ? 13 : k % 5 === 0 ? 7 : 4;
  if (y < 1391) rect(2494 - w, y, w, 1, AXIS);
}
for (let k = 0; k < 10; k++) label(2497, 265 + k * 114, '1,' + String(725 - k * 25).padStart(4, '0'), LABEL);
rect(2495, 203, 48, 16, '#fc0');
label(2496, 215, '1,07359', '#000');
rect(2495, 755, 48, 16, '#40a0ff');
label(2496, 767, '1,06147', '#000');

// quote box
rect(6, 159, 234, 30, '#272727');
label(8, 180, 'S', '#757575', { 'font-size': 15 });
label(25, 182, '1,06', '#d81010', { 'font-size': 13, textLength: 25, lengthAdjust: 'spacingAndGlyphs' });
label(56, 182, '14', '#f40000', { 'font-size': 23, 'font-weight': 'bold', textLength: 26, lengthAdjust: 'spacingAndGlyphs' });
label(86, 174, '7', '#e01010', { 'font-size': 12 });
add('rect', { x: 99.5, y: 164.5, width: 49, height: 19, rx: 1, fill: '#252525', stroke: '#777' });
label(101, 178, '1', '#606060', { 'font-size': 12 });
rect(136, 167, 1, 14, '#777');
add('path', { d: 'M140 173h5l-2.500 3z', fill: '#777' });
label(153, 182, '1,06', '#b4b4b4', { 'font-size': 13, textLength: 25, lengthAdjust: 'spacingAndGlyphs' });
label(185, 182, '15', '#bcbcbc', { 'font-size': 23, 'font-weight': 'bold', textLength: 26, lengthAdjust: 'spacingAndGlyphs' });
label(215, 174, '6', '#b4b4b4', { 'font-size': 11 });
label(229, 180, 'B', '#757575', { 'font-size': 15 });

label(6, 201, 'WATERMARK WITH PLACEMENT(EUR/USD.Close)', '#fff', { textLength: 279, lengthAdjust: 'spacingAndGlyphs' });
label(6, 214, 'FRACTAL_CHANNEL(EUR/USD, 5)', '#e80000', { textLength: 191, lengthAdjust: 'spacingAndGlyphs' });
label(205, 214, 'Upper: 1,06121', '#e80000', { textLength: 89, lengthAdjust: 'spacingAndGlyphs' });
label(301, 214, 'Lower: 1,05863', '#00e', { textLength: 90, lengthAdjust: 'spacingAndGlyphs' });
```
